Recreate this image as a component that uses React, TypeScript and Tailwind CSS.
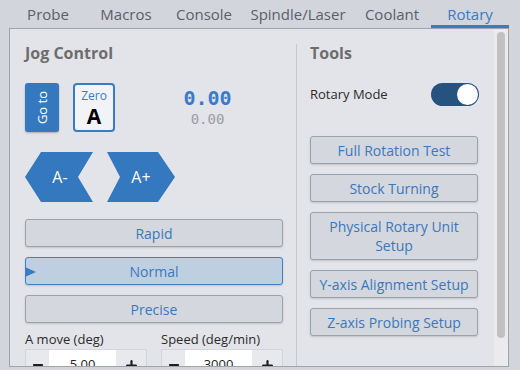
import { Minus, Plus } from 'lucide-react'

const tabs = [
  { label: 'Probe', w: 'w-[78px]' },
  { label: 'Macros', w: 'w-[78px]' },
  { label: 'Console', w: 'w-[78px]' },
  { label: 'Spindle/Laser', w: 'w-[110px]' },
  { label: 'Coolant', w: 'w-[78px]' },
  { label: 'Rotary', w: 'w-[78px]', active: true },
]

const tools = [
  { label: 'Full Rotation Test' },
  { label: 'Stock Turning' },
  { label: 'Physical Rotary Unit Setup', tall: true },
  { label: 'Y-axis Alignment Setup' },
  { label: 'Z-axis Probing Setup' },
]

function SpeedButton({ label, active }: { label: string; active?: boolean }) {
  return (
    <button
      className={
        active
          ? 'relative flex h-[28px] w-full items-center justify-center rounded-[3px] border border-[#3f80c6] bg-[#bfcfe2] text-[14px] text-[#3a78bd] shadow-[0_1px_2px_rgba(0,0,0,0.15)]'
          : 'relative flex h-[28px] w-full items-center justify-center rounded-[3px] border border-[#9ca2ab] bg-[#d4d7de] text-[14px] text-[#3a78bd] shadow-[0_1px_2px_rgba(0,0,0,0.15)]'
      }
    >
      {active && (
        <svg className="absolute left-[-1px] top-[9px]" width="11" height="10" viewBox="0 0 11 10">
          <polygon points="0,0 11,5 0,10" fill="#3a7bc3" />
        </svg>
      )}
      {label}
    </button>
  )
}

function Stepper({ label, value }: { label: string; value: string }) {
  return (
    <div>
      <div className="h-[18px] text-[13px] leading-[18px] text-[#2b2b2b]">{label}</div>
      <div className="mt-[1px] flex h-[32px] border border-[#d3d5da] bg-white">
        <div className="flex w-[23px] items-center justify-center bg-[#e8e9ec]">
          <Minus size={14} strokeWidth={3.5} color="#1f1f1f" />
        </div>
        <div className="flex flex-1 items-center justify-center text-[13px] text-[#222]">{value}</div>
        <div className="flex w-[30px] items-center justify-center bg-[#e8e9ec]">
          <Plus size={15} strokeWidth={3.5} color="#1f1f1f" />
        </div>
      </div>
    </div>
  )
}

export default function App() {
  return (
    <div className="h-[370px] w-[520px] overflow-hidden bg-[#d2d5dc] font-['Open_Sans',sans-serif]">
      <div className="flex h-[28px] pl-[9px]">
        {tabs.map((t) => (
          <div
            key={t.label}
            className={
              t.active
                ? `${t.w} flex items-center justify-center border-b-[3px] border-[#3a7bc3] pt-[3px] text-[15px] text-[#3b7bc3]`
                : `${t.w} flex items-center justify-center pb-0 text-[15px] text-[#5a606a]`
            }
          >
            {t.label}
          </div>
        ))}
      </div>

      <div className="ml-[9px] flex h-[339px] w-[500px] overflow-hidden border border-[#9fa4ac] bg-[#e3e4e9]">
        {/* jog column */}
        <div className="w-[286px] shrink-0 pl-[15px] pr-[13px] pt-[14px]">
          <h2 className="h-[20px] text-[16px] font-bold leading-[20px] text-[#6d6d6d]">Jog Control</h2>

          <div className="mt-[20px] flex h-[49px] items-stretch">
            <button className="flex w-[34px] items-center justify-center rounded-[3px] bg-[#3478bf] shadow-[0_1px_2px_rgba(0,0,0,0.25)]">
              <span className="rotate-180 text-[13px] leading-none text-white [writing-mode:vertical-rl]">Go to</span>
            </button>
            <div className="ml-[14px] flex w-[42px] flex-col items-center rounded-[4px] border-2 border-[#3a7bc3] bg-[#f2f3f6]">
              <span className="mt-[4px] text-[12px] leading-[14px] text-[#3b7bc3]">Zero</span>
              <span className="mt-[2px] text-[21px] font-bold leading-[22px] text-black">A</span>
            </div>
            <div className="ml-[17px] flex flex-1 flex-col items-center pt-[3px] font-['DejaVu_Sans_Mono',monospace]">
              <span className="text-[20px] font-bold leading-[24px] text-[#3a7bc8]">0.00</span>
              <span className="text-[14px] leading-[18px] text-[#9b9da4]">0.00</span>
            </div>
          </div>

          <div className="mt-[20px] flex gap-[14px]">
            <button className="flex h-[50px] w-[68px] items-center justify-center bg-[#3478bf] pl-[2px] text-[16px] text-white [clip-path:polygon(0_25px,16px_0,68px_0,53px_25px,68px_50px,16px_50px)]">
              A-
            </button>
            <button className="flex h-[50px] w-[68px] items-center justify-center bg-[#3478bf] text-[16px] text-white [clip-path:polygon(0_0,51px_0,68px_25px,51px_50px,0_50px,13px_25px)]">
              A+
            </button>
          </div>

          <div className="mt-[17px] flex flex-col gap-[10px]">
            <SpeedButton label="Rapid" />
            <SpeedButton label="Normal" active />
            <SpeedButton label="Precise" />
          </div>

          <div className="mt-[7px] grid grid-cols-2 gap-[14px]">
            <Stepper label="A move (deg)" value="5.00" />
            <Stepper label="Speed (deg/min)" value="3000" />
          </div>
        </div>

        <div className="mt-[15px] w-px shrink-0 bg-[#c6c8ce]" />

        {/* tools column */}
        <div className="w-[197px] shrink-0 pl-[13px] pr-[16px] pt-[14px]">
          <h2 className="h-[20px] text-[16px] font-bold leading-[20px] text-[#6d6d6d]">Tools</h2>

          <div className="mt-[20px] flex h-[23px] items-center justify-between">
            <span className="text-[13px] text-[#2b2b2b]">Rotary Mode</span>
            <div className="mr-[-1px] flex h-[23px] w-[48px] items-center justify-end rounded-full bg-[#26527f] pr-[1px]">
              <div className="h-[21px] w-[21px] rounded-full bg-white" />
            </div>
          </div>

          <div className="mt-[30px] flex flex-col gap-[10px]">
            {tools.map((t) => (
              <button
                key={t.label}
                className={
                  t.tall
                    ? 'rounded-[3px] border border-[#9ca2ab] bg-[#d4d7de] px-[8px] py-[4px] text-[14px] leading-[19px] text-[#3a78bd] shadow-[0_1px_2px_rgba(0,0,0,0.15)]'
                    : 'flex h-[28px] items-center justify-center rounded-[3px] border border-[#9ca2ab] bg-[#d4d7de] text-[14px] text-[#3a78bd] shadow-[0_1px_2px_rgba(0,0,0,0.15)]'
                }
              >
                {t.label}
              </button>
            ))}
          </div>
        </div>

        <div className="w-[14px] shrink-0 bg-[#ebebee] pt-[3px]">
          <div className="mx-auto h-[306px] w-[8px] rounded-full bg-[#c1c1c1]" />
        </div>
      </div>
    </div>
  )
}
